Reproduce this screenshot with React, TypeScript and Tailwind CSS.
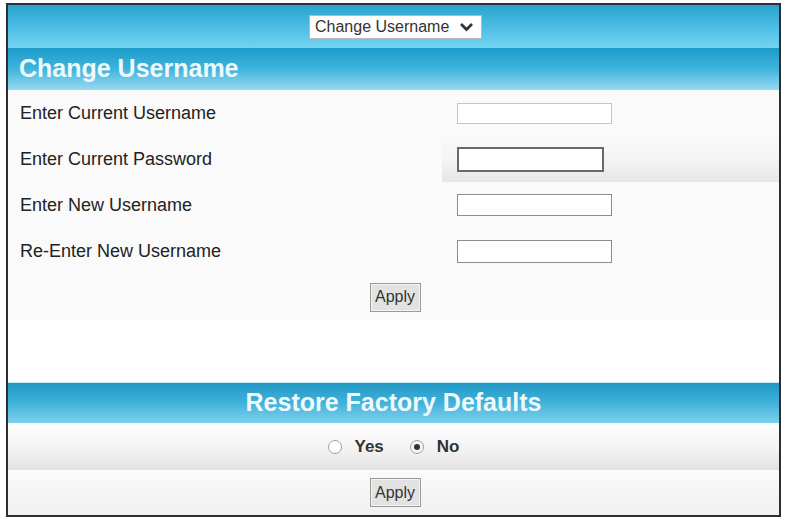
import React from "react";

const font = { fontFamily: '"Liberation Sans", Arial, sans-serif' };

function Row({ label, children, shaded }: { label: string; children: React.ReactNode; shaded?: boolean }) {
  return (
    <div className="flex h-[46px] items-stretch">
      <div className="flex w-[434px] items-center pl-[12px] text-[18px] text-[#222]">{label}</div>
      <div
        className={
          "flex flex-1 items-center pl-[15px] " +
          (shaded ? "bg-gradient-to-b from-[#fafafa] via-[#f4f4f4] to-[#e6e6e6]" : "")
        }
      >
        {children}
      </div>
    </div>
  );
}

function ApplyButton() {
  return (
    <button className="flex h-[29px] w-[51px] items-center justify-center border border-[#9a9a9a] bg-[#e2e2e2] text-[16px] text-[#333] shadow-[inset_0_0_0_1px_#f4f4f4]">
      Apply
    </button>
  );
}

export default function App() {
  return (
    <div className="h-[520px] w-[787px] bg-white pl-[6px] pt-[3px]" style={font}>
      <div className="flex h-[514px] w-[775px] flex-col border-2 border-[#2b2f33] bg-[#fafafa]">
        {/* top bar */}
        <div className="flex h-[43px] items-center justify-center bg-gradient-to-b from-[#27a3cf] via-[#4bbde3] to-[#74d3f1] pl-[4px] pt-[1px]">
          <div className="flex h-[24px] w-[173px] items-center justify-between border border-[#b9b9b9] bg-white pl-[5px] pr-[7px] text-[16px] text-[#333]">
            <span>Change Username</span>
            <svg width="15" height="10" viewBox="0 0 15 10">
              <path d="M2 2 L7.5 7.5 L13 2" fill="none" stroke="#333" strokeWidth="2.8" />
            </svg>
          </div>
        </div>
        {/* header */}
        <div className="flex h-[42px] items-center bg-gradient-to-b from-[#1c9bc9] via-[#3db4dc] to-[#95daf1] pl-[11px] text-[25px] font-bold text-[#eef9fd]">
          Change Username
        </div>
        {/* form */}
        <Row label="Enter Current Username">
          <div className="h-[21px] w-[155px] border border-[#c6c6c6] bg-white" />
        </Row>
        <Row label="Enter Current Password" shaded>
          <div className="h-[25px] w-[147px] border-2 border-[#6a6a6a] bg-white" />
        </Row>
        <Row label="Enter New Username">
          <div className="h-[22px] w-[155px] border-[1.5px] border-[#8c8c8c] bg-white" />
        </Row>
        <Row label="Re-Enter New Username">
          <div className="h-[23px] w-[155px] border-[1.5px] border-[#8c8c8c] bg-white" />
        </Row>
        <div className="flex h-[46px] items-center justify-center pl-[3px]">
          <ApplyButton />
        </div>
        <div className="h-[62px] bg-white" />
        {/* restore band */}
        <div className="flex h-[41px] items-center justify-center border-t border-[#c6eef9] bg-gradient-to-b from-[#2197c5] via-[#40b2da] to-[#7dd1ee] text-[25px] font-bold text-[#eef9fd]">
          Restore Factory Defaults
        </div>
        <div className="flex h-[47px] items-center justify-center bg-gradient-to-b from-[#fdfdfd] via-[#f5f5f5] to-[#e2e2e2] text-[17px] font-bold text-[#333]">
          <span className="h-[14px] w-[14px] rounded-full border border-[#a0a0a0] bg-white" />
          <span className="ml-[13px]">Yes</span>
          <span className="ml-[26px] flex h-[14px] w-[14px] items-center justify-center rounded-full border border-[#a0a0a0] bg-[#f4f4f4]">
            <span className="h-[6px] w-[6px] rounded-full bg-[#333]" />
          </span>
          <span className="ml-[13px]">No</span>
        </div>
        <div className="flex flex-1 items-center justify-center bg-gradient-to-b from-[#fbfbfb] to-[#f0f0f0] pl-[3px]">
          <ApplyButton />
        </div>
      </div>
    </div>
  );
}
